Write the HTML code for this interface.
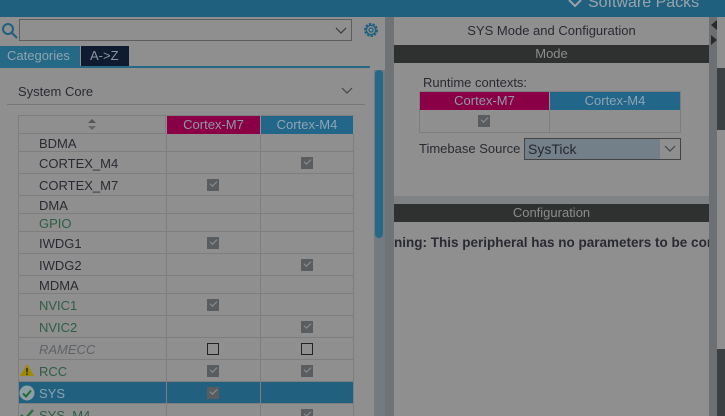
<!DOCTYPE html>
<html style="overflow:hidden;width:725px;height:416px"><head><style>
*{margin:0;padding:0;box-sizing:border-box}
body{width:725px;height:416px;overflow:hidden;background:#8f8f8f;font-family:"Liberation Sans",sans-serif;position:relative;color:#2a2a33}
.a{position:absolute}
.top{left:0;top:0;width:725px;height:17px;background:#20607f}
.cell{position:absolute;border-right:1px solid #7e7e7e;border-bottom:1px solid #7e7e7e}
.cb{position:absolute;width:12px;height:12px;background:#5a5d60}
.cb:after{content:"";position:absolute;left:3px;top:2px;width:6px;height:3px;border-left:1.5px solid #8f9194;border-bottom:1.5px solid #8f9194;transform:rotate(-45deg)}
.eb{position:absolute;width:12px;height:12px;border:1px solid #222}
.lbl{position:absolute;left:39px;font-size:13px}
</style></head><body>
<div class="a top"></div>
<svg class="a" style="left:567px;top:0" width="16" height="8"><path d="M2 0l6 6 6-6" stroke="#9aa3a8" stroke-width="2" fill="none"/></svg>
<div class="a" style="left:588px;top:-6px;font-size:16px;color:#9aa3a8">Software Packs</div>
<svg class="a" style="left:1px;top:21px" width="18" height="18"><circle cx="7" cy="8" r="5" fill="none" stroke="#1f5f80" stroke-width="2"/><line x1="11" y1="12" x2="16" y2="17" stroke="#1f5f80" stroke-width="2"/></svg>
<div class="a" style="left:19px;top:19px;width:333px;height:22px;border:1px solid #5e5e5e"></div>
<svg class="a" style="left:335px;top:27px" width="12" height="8"><path d="M1 1l5 5 5-5" stroke="#3a3a3a" stroke-width="1.2" fill="none"/></svg>
<svg class="a" style="left:362px;top:21px" width="18" height="18" viewBox="0 0 18 18"><circle cx="9" cy="9" r="6" fill="none" stroke="#1f5f80" stroke-width="2" stroke-dasharray="2.4 1.3"/><circle cx="9" cy="9" r="4.6" fill="none" stroke="#1f5f80" stroke-width="1.3"/><circle cx="9" cy="9" r="2" fill="none" stroke="#1f5f80" stroke-width="1.3"/></svg>
<div class="a" style="left:0;top:46px;width:80px;height:20px;background:#256987;color:#8fa4b0;font-size:13px;padding:2px 0 0 7px">Categories</div>
<div class="a" style="left:81px;top:46px;width:48px;height:20px;background:#0f1b30;color:#8b95a2;font-size:13px;padding:2px 0 0 9px">A-&gt;Z</div>
<div class="a" style="left:0;top:66px;width:370px;height:2px;background:#256987"></div>
<div class="a" style="left:18px;top:84px;font-size:13px">System Core</div>
<svg class="a" style="left:341px;top:87px" width="12" height="8"><path d="M1 1l5 5 5-5" stroke="#444" stroke-width="1.2" fill="none"/></svg>
<div class="a" style="left:7px;top:104px;width:358px;height:1px;background:#777"></div>
<div class="a" style="left:374px;top:70px;width:11px;height:346px;background:#737a80"></div>
<div class="a" style="left:375px;top:70px;width:8px;height:168px;background:#256987;border-radius:4px"></div>
<div class="a" style="left:385px;top:17px;width:9px;height:399px;background:#6f7375"></div>
<div class="a" style="left:18px;top:115px;width:336px;height:301px;border-left:1px solid #7e7e7e;border-top:1px solid #7e7e7e"></div>
<div class="cell" style="left:19px;top:116px;width:147px;height:18px"></div>
<svg class="a" style="left:87px;top:118px" width="10" height="14"><path d="M1 5l4-4 4 4z" fill="#555"/><path d="M1 8l4 4 4-4z" fill="#666"/></svg>
<div class="a" style="left:167px;top:116px;width:93px;height:18px;background:#8a0047;color:#8e9aa4;font-size:13px;text-align:center;line-height:18px">Cortex-M7</div>
<div class="a" style="left:261px;top:116px;width:92px;height:18px;background:#22668a;color:#8ea5b3;font-size:13px;text-align:center;line-height:18px">Cortex-M4</div>
<div id="rows"></div>
<div class="a" style="left:394px;top:17px;width:315px;height:399px;background:#8f8f8f"></div>
<div class="a" style="left:394px;top:23px;width:315px;text-align:center;font-size:13px">SYS Mode and Configuration</div>
<div class="a" style="left:394px;top:45px;width:315px;height:18px;background:#2f3030;color:#8c8c8c;font-size:13px;text-align:center;line-height:18px">Mode</div>
<div class="a" style="left:423px;top:75px;font-size:13px">Runtime contexts:</div>
<div class="a" style="left:419px;top:91px;width:262px;height:42px;border:1px solid #7e7e7e"></div>
<div class="a" style="left:420px;top:92px;width:129px;height:18px;background:#8a0047;color:#8e9aa4;font-size:13px;text-align:center;line-height:18px">Cortex-M7</div>
<div class="a" style="left:550px;top:92px;width:130px;height:18px;background:#22668a;color:#8ea5b3;font-size:13px;text-align:center;line-height:18px">Cortex-M4</div>
<div class="a" style="left:549px;top:110px;width:1px;height:22px;background:#7e7e7e"></div>
<div class="cb" style="left:478px;top:115px"></div>
<div class="a" style="left:419px;top:141px;font-size:13px">Timebase Source</div>
<div class="a" style="left:524px;top:138px;width:157px;height:22px;border:1px solid #444;background:#73808a"></div>
<div class="a" style="left:660px;top:139px;width:20px;height:20px;background:#8f8f8f"></div>
<svg class="a" style="left:664px;top:145px" width="12" height="8"><path d="M1 1l5 5 5-5" stroke="#444" stroke-width="1.2" fill="none"/></svg>
<div class="a" style="left:528px;top:141px;font-size:14px;color:#26282c">SysTick</div>
<div class="a" style="left:394px;top:196px;width:315px;height:8px;background:#7f8284"></div>
<div class="a" style="left:394px;top:204px;width:315px;height:18px;background:#2f3030;color:#8c8c8c;font-size:13px;text-align:center;line-height:18px">Configuration</div>
<div class="a" style="left:394px;top:235px;width:315px;overflow:hidden;white-space:nowrap;font-size:13.5px;font-weight:bold;color:#2a2a33">ning: This peripheral has no parameters to be configured</div>
<div class="a" style="left:709px;top:17px;width:8px;height:399px;background:#6c7073"></div>
<div class="a" style="left:711px;top:20px;width:0;height:0;border-top:5px solid transparent;border-bottom:5px solid transparent;border-right:6px solid #2a2a2a"></div>
<div class="a" style="left:711px;top:35px;width:0;height:0;border-top:5px solid transparent;border-bottom:5px solid transparent;border-left:6px solid #2a2a2a"></div>
<div class="a" style="left:717px;top:68px;width:8px;height:62px;background:#3b3f41"></div>
<div class="a" style="left:717px;top:349px;width:8px;height:67px;background:#3b3f41"></div>
<script>
var rows=[["BDMA",18,0,0,""],["CORTEX_M4",22,0,1,""],["CORTEX_M7",22,1,0,""],["DMA",18,0,0,""],["GPIO",18,0,0,"g"],["IWDG1",22,1,0,""],["IWDG2",22,0,1,""],["MDMA",18,0,0,""],["NVIC1",22,1,0,"g"],["NVIC2",22,0,1,"g"],["RAMECC",22,2,2,"i"],["RCC",22,1,1,"w"],["SYS",22,1,0,"s"],["SYS_M4",12,0,1,"c"]];
var y=134,h="";
rows.forEach(function(r){
 var bg=r[4]=="s"?"background:#21607f;":"";
 var rh=r[4]=="c"?22:r[1];
 h+='<div class="cell" style="left:19px;top:'+y+'px;width:148px;height:'+rh+'px;'+bg+'"></div>';
 h+='<div class="cell" style="left:167px;top:'+y+'px;width:94px;height:'+rh+'px;'+bg+'"></div>';
 h+='<div class="cell" style="left:261px;top:'+y+'px;width:93px;height:'+rh+'px;'+bg+'"></div>';
 var col=r[4]=="g"||r[4]=="w"||r[4]=="c"?"#2e5e46":r[4]=="s"?"#8ea2ad":r[4]=="i"?"#5f6266":"#2a2a33";
 var st=r[4]=="i"?"font-style:italic;":"";
 var ty=y+(rh-15)/2;
 h+='<div class="lbl" style="top:'+ty+'px;color:'+col+';'+st+'">'+r[0]+'</div>';
 var cy=y+(rh-12)/2;
 [[r[2],207],[r[3],301]].forEach(function(c){
  if(c[0]==1)h+='<div class="cb" style="left:'+c[1]+'px;top:'+cy+'px"></div>';
  if(c[0]==2)h+='<div class="eb" style="left:'+c[1]+'px;top:'+cy+'px"></div>';
 });
 if(r[4]=="w")h+='<svg class="a" style="left:20px;top:'+(y+4)+'px" width="14" height="13"><polygon points="7,0 14,12 0,12" fill="#a08a00"/><rect x="6.2" y="4" width="1.6" height="4.5" fill="#333"/><rect x="6.2" y="9.5" width="1.6" height="1.5" fill="#333"/></svg>';
 if(r[4]=="s")h+='<svg class="a" style="left:19px;top:'+(y+3)+'px" width="16" height="16"><circle cx="8" cy="8" r="7.5" fill="#8e9ea5"/><path d="M4 8.5l3 3 5-6" stroke="#236b3a" stroke-width="2" fill="none"/></svg>';
 if(r[4]=="c")h+='<svg class="a" style="left:20px;top:'+(y+3)+'px" width="14" height="14"><path d="M1 8l4 4 8-9" stroke="#2e6e3c" stroke-width="2.4" fill="none"/></svg>';
 y+=r[1];
});
document.getElementById("rows").outerHTML=h;
</script>
</body></html>
